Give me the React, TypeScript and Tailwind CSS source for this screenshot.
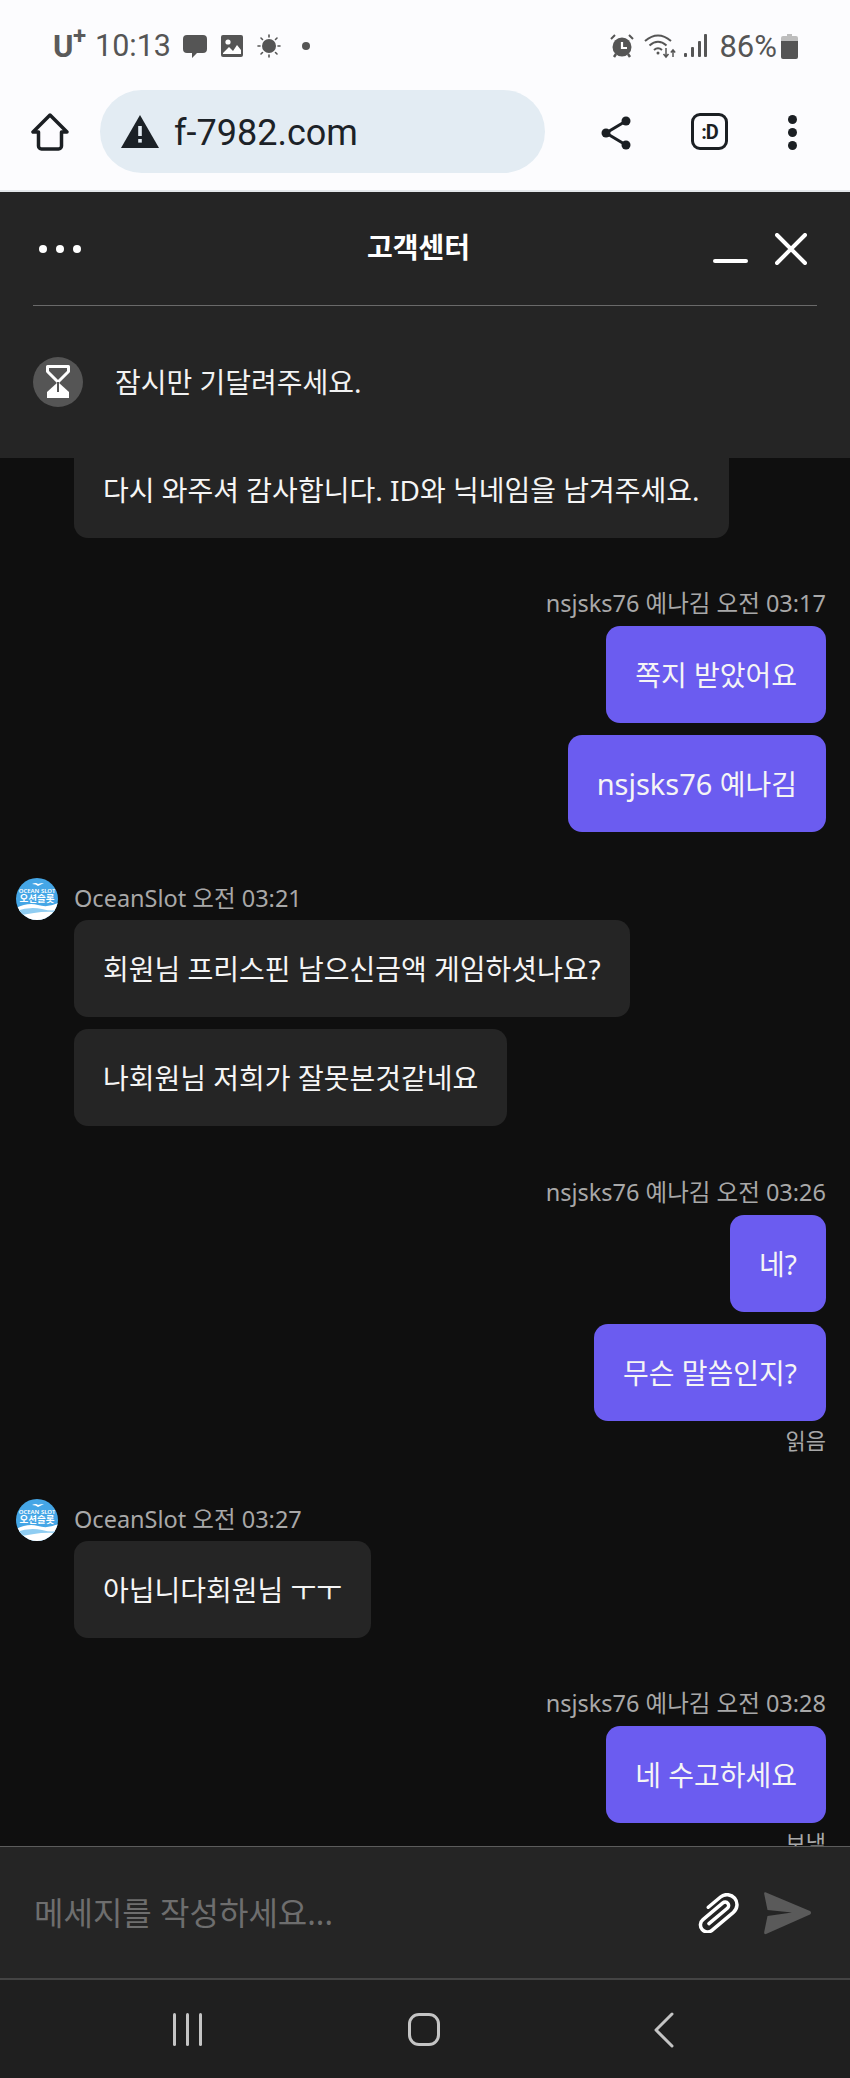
import React from 'react';

const font = "font-['Noto_Sans','Noto_Sans_CJK_KR',sans-serif]";

function OceanAvatar() {
  return (
    <svg width="42" height="42" viewBox="0 0 42 42" className="shrink-0">
      <defs>
        <clipPath id="ocean-clip">
          <circle cx="21" cy="21" r="21" />
        </clipPath>
      </defs>
      <g clipPath="url(#ocean-clip)">
        <rect width="42" height="42" fill="#45a6e6" />
        <path d="M0 30 Q12 24 22 27 T42 25 V42 H0 Z" fill="#ffffff" />
        <path d="M0 33 Q14 28 26 31 T42 31 V34 Q28 33 18 35 T0 37 Z" fill="#8fcdf2" />
        <path d="M16 6 Q20 4 22 6 Q25 5 28 5 Q24 7 22 8 Q20 6 16 6 Z" fill="#ffffff" />
        <text x="21" y="15" textAnchor="middle" fill="#ffffff" fontSize="6" fontWeight="600" fontFamily="Noto Sans">
          OCEAN SLOT
        </text>
        <text x="21" y="24" textAnchor="middle" fill="#ffffff" fontSize="9.5" fontWeight="700" fontFamily="Noto Sans CJK KR">
          오션슬롯
        </text>
      </g>
    </svg>
  );
}

function StatusBar() {
  return (
    <div className="h-[90px] flex items-start justify-between pl-[53px] pr-[52px] pt-[26px] text-[#555555] font-['Roboto',sans-serif]">
      <div className="flex items-center h-[40px]">
        <span className="text-[31px] font-bold leading-none text-[#5a5a5a] relative w-[32px]">
          U
          <span className="absolute left-[20px] -top-[7px] text-[24px]">+</span>
        </span>
        <span className="ml-[10px] text-[30.500px] leading-none">10:13</span>
        <svg width="26" height="25" viewBox="0 0 26 25" className="ml-[11px]" fill="#555555">
          <path d="M5 1h16a4 4 0 0 1 4 4v10a4 4 0 0 1-4 4h-6l-5 5v-5H5a4 4 0 0 1-4-4V5a4 4 0 0 1 4-4z" />
        </svg>
        <svg width="24" height="24" viewBox="0 0 24 24" className="ml-[12px]" fill="#555555">
          <path d="M3 1h18a2 2 0 0 1 2 2v18a2 2 0 0 1-2 2H3a2 2 0 0 1-2-2V3a2 2 0 0 1 2-2z" />
          <path d="M3 19l6-6 4 4 4-6 4 5v4H3z" fill="#fff" />
          <circle cx="8" cy="8" r="2.6" fill="#fff" />
        </svg>
        <svg width="24" height="24" viewBox="0 0 24 24" className="ml-[13px]" stroke="#555555" fill="#555555" strokeWidth="1.6" strokeLinecap="round">
          <circle cx="12" cy="12" r="7" stroke="none" />
          <path d="M12 1v2M12 21v2M1 12h2M21 12h2M4 4l1.5 1.5M18.5 18.5L20 20M4 20l1.5-1.5M18.5 5.500L20 4" />
        </svg>
        <span className="ml-[21px] w-[8px] h-[8px] rounded-full bg-[#555555]" />
      </div>
      <div className="flex items-center h-[40px]">
        <svg width="24" height="24" viewBox="0 0 24 24" fill="#555555">
          <circle cx="12" cy="13" r="9.500" />
          <path d="M12 8v6h5" stroke="#fff" strokeWidth="2.200" fill="none" />
          <path d="M1 5l4-4M23 5l-4-4" stroke="#555555" strokeWidth="2" />
          <path d="M4 23l2-3M20 23l-2-3" stroke="#555555" strokeWidth="2.500" />
        </svg>
        <svg width="33" height="26" viewBox="0 0 33 26" className="ml-[10px]" fill="none" stroke="#555555" strokeWidth="2">
          <path d="M1 8Q14 -3 27 8" />
          <path d="M5.500 12.500Q14 5 22.500 12.500" />
          <path d="M10 17Q14 13.500 18 17" />
          <circle cx="14" cy="20" r="1.500" fill="#555555" stroke="none" />
          <path d="M22 15v9M19.500 21l2.500 3 2.500-3M29 24v-7M26.800 19.500L29 17l2.200 2.500" strokeWidth="1.500" />
        </svg>
        <svg width="23" height="24" viewBox="0 0 23 24" className="ml-[7px]" fill="#555555">
          <rect x="0" y="19" width="3" height="4" rx="1" />
          <rect x="7" y="13" width="3" height="10" rx="1" />
          <rect x="14" y="7" width="3" height="16" rx="1" />
          <rect x="20" y="0" width="3" height="23" rx="1" />
        </svg>
        <span className="ml-[12px] text-[31px] leading-none">86%</span>
        <svg width="17" height="25" viewBox="0 0 17 25" className="ml-[4px]">
          <path d="M6 0h5v2h4a2 2 0 0 1 2 2v3H0V4a2 2 0 0 1 2-2h4z" fill="#bdbdbd" />
          <path d="M0 7h17v16a2 2 0 0 1-2 2H2a2 2 0 0 1-2-2z" fill="#555555" />
        </svg>
      </div>
    </div>
  );
}

function BrowserBar() {
  return (
    <div className="h-[102px] border-b-2 border-[#e3e7ea] flex items-start pl-[31px]">
      <svg width="38" height="38" viewBox="0 0 38 38" className="mt-[23px]" fill="none" stroke="#1b1f23" strokeWidth="3.500" strokeLinejoin="round">
        <path d="M19 2L2 19h5.500v14a3 3 0 0 0 3 3h17a3 3 0 0 0 3-3V19H36z" />
      </svg>
      <div className="ml-[31px] w-[445px] h-[83px] rounded-[42px] bg-[#e3ecf3] flex items-center pl-[21px]">
        <svg width="38" height="33" viewBox="0 0 38 33">
          <path d="M19 0L38 33H0z" fill="#1b2126" />
          <rect x="17.200" y="11" width="3.600" height="10" fill="#e3ecf3" />
          <rect x="17.200" y="24" width="3.600" height="3.600" fill="#e3ecf3" />
        </svg>
        <span className="ml-[15px] mt-[3px] text-[36px] leading-none text-[#1c2227] font-['Roboto',sans-serif]">f-7982.com</span>
      </div>
      <svg width="33" height="36" viewBox="0 0 33 36" className="ml-[55px] mt-[25px]" fill="#1b1f23" stroke="#1b1f23" strokeWidth="3">
        <path d="M26 6L6 18l20 12" fill="none" />
        <circle cx="26" cy="6" r="4.500" stroke="none" />
        <circle cx="6" cy="18" r="4.500" stroke="none" />
        <circle cx="26" cy="30" r="4.500" stroke="none" />
      </svg>
      <div className="ml-[58px] mt-[23px] w-[37px] h-[37px] rounded-[9px] border-[3.500px] border-[#1b1f23] flex items-center justify-center text-[20px] font-bold tracking-tighter leading-none text-[#1b1f23] font-['Roboto',sans-serif]">
        :D
      </div>
      <div className="ml-[60px] mt-[25px] flex flex-col gap-[4px]">
        <span className="w-[9px] h-[9px] rounded-full bg-[#1b1f23]" />
        <span className="w-[9px] h-[9px] rounded-full bg-[#1b1f23]" />
        <span className="w-[9px] h-[9px] rounded-full bg-[#1b1f23]" />
      </div>
    </div>
  );
}

function ChatHeader() {
  return (
    <div className="h-[266px] bg-[#252525] px-[33px] shrink-0 relative z-10">
      <div className="h-[114px] border-b border-[#6a6a6a] flex items-center">
        <div className="flex gap-[9px] ml-[6px] w-[328px]">
          <span className="w-[8px] h-[8px] rounded-full bg-white" />
          <span className="w-[8px] h-[8px] rounded-full bg-white" />
          <span className="w-[8px] h-[8px] rounded-full bg-white" />
        </div>
        <div className="flex-1 text-[28px] font-bold text-white leading-none -mt-[4px]">고객센터</div>
        <div className="flex items-center w-[104px]">
          <span className="w-[35px] h-[4px] bg-white rounded-full mt-[24px]" />
          <svg width="32" height="32" viewBox="0 0 32 32" className="ml-[27px]" stroke="#fff" strokeWidth="4" strokeLinecap="round">
            <path d="M2 2l28 28M30 2L2 30" />
          </svg>
        </div>
      </div>
      <div className="flex items-center mt-[51px]">
        <div className="w-[50px] h-[50px] rounded-full bg-[#555555] flex items-center justify-center">
          <svg width="24" height="34" viewBox="0 0 24 34" fill="none">
            <path d="M1.500 1.500h21v5L12 17 1.500 6.500z" stroke="#fff" strokeWidth="3" strokeLinejoin="round" />
            <path d="M12 17L1 27v6h22v-6z" fill="#fff" />
            <path d="M11 17h2v10h-2z" fill="#555555" />
          </svg>
        </div>
        <span className="ml-[32px] text-[28px] leading-none text-[#f2f2f2]">잠시만 기달려주세요.</span>
      </div>
    </div>
  );
}

function Bubble({ children, mine }: { children: React.ReactNode; mine?: boolean }) {
  return (
    <div
      className={
        'h-[97px] shrink-0 flex items-center px-[29px] rounded-[14px] text-[28px] leading-none whitespace-pre text-[#f5f5f5] ' +
        (mine ? 'bg-[#6b5cf0]' : 'bg-[#252525]')
      }
    >
      {children}
    </div>
  );
}

function MineGroup({ time, items, status, top }: { time: string; items: React.ReactNode[]; status?: string; top: string }) {
  return (
    <div className={'flex flex-col items-end pr-[24px] ' + top}>
      <div className="h-[34px] mb-[6px] text-[23.500px] leading-[34px] text-[#a8a8a8] whitespace-nowrap">nsjsks76 예나김 오전 {time}</div>
      <div className="flex flex-col items-end gap-[12px]">
        {items.map((t, i) => (
          <Bubble key={i} mine>
            {t}
          </Bubble>
        ))}
      </div>
      {status && <div className="h-[34px] mt-[2px] text-[22px] leading-[34px] text-[#a8a8a8]">{status}</div>}
    </div>
  );
}

function TheirGroup({ time, items, top }: { time: string; items: string[]; top: string }) {
  return (
    <div className={'pl-[16px] ' + top}>
      <div className="h-[43px] flex items-center">
        <OceanAvatar />
        <span className="ml-[16px] text-[23.500px] leading-none text-[#a8a8a8] whitespace-nowrap">OceanSlot 오전 {time}</span>
      </div>
      <div className="pl-[58px] flex flex-col items-start gap-[12px]">
        {items.map((t, i) => (
          <Bubble key={i}>{t}</Bubble>
        ))}
      </div>
    </div>
  );
}

function Messages() {
  return (
    <div className="h-[1388px] shrink-0 overflow-hidden bg-[#0f0f0f]">
      <div className="pl-[74px] -mt-[17px] flex items-start">
        <Bubble>다시 와주셔 감사합니다. ID와 닉네임을 남겨주세요.</Bubble>
      </div>
      <MineGroup
        top="mt-[48px]"
        time="03:17"
        items={['쪽지 받았어요', <><span className="text-[29px]">nsjsks76</span> 예나김</>]}
      />
      <TheirGroup top="mt-[45px]" time="03:21" items={['회원님 프리스핀 남으신금액 게임하셧나요?', '나회원님 저희가 잘못본것같네요']} />
      <MineGroup top="mt-[49px]" time="03:26" items={['네?', '무슨 말씀인지?']} status="읽음" />
      <TheirGroup top="mt-[41px]" time="03:27" items={['아닙니다회원님 ㅜㅜ']} />
      <MineGroup top="mt-[48px]" time="03:28" items={['네 수고하세요']} status="보냄" />
    </div>
  );
}

function InputBar() {
  return (
    <div className="h-[134px] shrink-0 bg-[#252525] border-t border-[#5c5c5c] border-b-2 border-b-[#444444] flex items-center pl-[34px] pr-[38px]">
      <span className="flex-1 text-[32px] leading-none text-[#6e6e6e]">메세지를 작성하세요...</span>
      <svg width="46" height="40" viewBox="0 0 46 40" fill="none" stroke="#fff" strokeWidth="3.500" strokeLinecap="round">
        <g transform="rotate(-40 23 20)">
          <path d="M14 13H38a3.500 3.500 0 0 0 0-7H12a7 7 0 0 0 0 14H40a10 10 0 0 0 0-20H24" transform="translate(-4 10)" />
        </g>
      </svg>
      <svg width="48" height="44" viewBox="0 0 48 44" className="ml-[24px]" fill="#5a5a5a">
        <path d="M2 1.500L46 20a2 2 0 0 1 0 3.500L2 43c-1.500.5-2-.5-1.800-2L3.500 25 28 21.500 3.500 19 .2 3c-.2-1.500.5-2 1.800-1.500z" />
      </svg>
    </div>
  );
}

function NavBar() {
  return (
    <div className="flex-1 bg-[#1f1f1f] flex items-start pt-[33px] pl-[173px]">
      <div className="flex gap-[10px]">
        <span className="w-[3px] h-[33px] bg-[#c4c4c4] rounded-full" />
        <span className="w-[3px] h-[33px] bg-[#c4c4c4] rounded-full" />
        <span className="w-[3px] h-[33px] bg-[#c4c4c4] rounded-full" />
      </div>
      <div className="ml-[206px] w-[32px] h-[33px] rounded-[11px] border-[3px] border-[#c4c4c4]" />
      <svg width="22" height="36" viewBox="0 0 22 36" className="ml-[213px] -mt-[1px]" fill="none" stroke="#c4c4c4" strokeWidth="3" strokeLinecap="round" strokeLinejoin="round">
        <path d="M19 2L3 18l16 16" />
      </svg>
    </div>
  );
}

export default function App() {
  return (
    <div className={'w-[850px] h-[2078px] flex flex-col overflow-hidden bg-[#fcfcfe] ' + font}>
      <StatusBar />
      <BrowserBar />
      <ChatHeader />
      <Messages />
      <InputBar />
      <NavBar />
    </div>
  );
}
